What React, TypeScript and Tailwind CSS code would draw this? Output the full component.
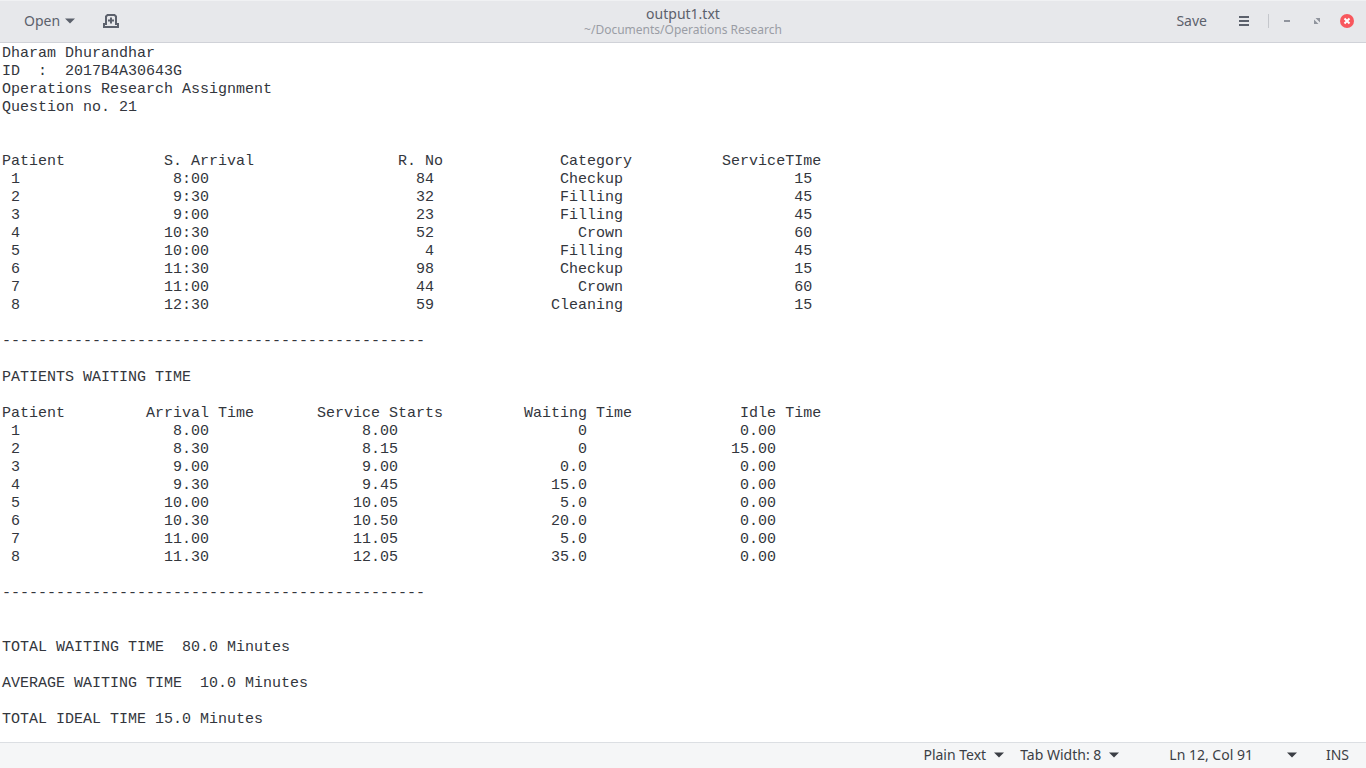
import React from "react";

const WAIT_RULE = "-".repeat(47);

/** Places [text, end column] pairs on one fixed-width line. */
function line(...cells: [string, number][]): string {
  return cells.reduce((out, [text, end]) => out + text.padStart(end - out.length), "");
}

const appointments: [string, string, string, string, string][] = [
  ["1", "8:00", "84", "Checkup", "15"],
  ["2", "9:30", "32", "Filling", "45"],
  ["3", "9:00", "23", "Filling", "45"],
  ["4", "10:30", "52", "Crown", "60"],
  ["5", "10:00", "4", "Filling", "45"],
  ["6", "11:30", "98", "Checkup", "15"],
  ["7", "11:00", "44", "Crown", "60"],
  ["8", "12:30", "59", "Cleaning", "15"],
];

const waits: [string, string, string, string, string][] = [
  ["1", "8.00", "8.00", "0", "0.00"],
  ["2", "8.30", "8.15", "0", "15.00"],
  ["3", "9.00", "9.00", "0.0", "0.00"],
  ["4", "9.30", "9.45", "15.0", "0.00"],
  ["5", "10.00", "10.05", "5.0", "0.00"],
  ["6", "10.30", "10.50", "20.0", "0.00"],
  ["7", "11.00", "11.05", "5.0", "0.00"],
  ["8", "11.30", "12.05", "35.0", "0.00"],
];

const documentText = [
  "Dharam Dhurandhar",
  "ID  :  2017B4A30643G",
  "Operations Research Assignment",
  "Question no. 21",
  "",
  "",
  line(["Patient", 7], ["S. Arrival", 28], ["R. No", 49], ["Category", 70], ["ServiceTIme", 91]),
  ...appointments.map(([n, a, r, c, s]) => line([n, 2], [a, 23], [r, 48], [c, 69], [s, 90])),
  "",
  WAIT_RULE,
  "",
  "PATIENTS WAITING TIME",
  "",
  line(["Patient", 7], ["Arrival Time", 28], ["Service Starts", 49], ["Waiting Time", 70], ["Idle Time", 91]),
  ...waits.map(([n, a, s, w, i]) => line([n, 2], [a, 23], [s, 44], [w, 65], [i, 86])),
  "",
  WAIT_RULE,
  "",
  "",
  "TOTAL WAITING TIME  80.0 Minutes",
  "",
  "AVERAGE WAITING TIME  10.0 Minutes",
  "",
  "TOTAL IDEAL TIME 15.0 Minutes",
].join("\n");

function Caret() {
  return (
    <svg width="10" height="6" viewBox="0 0 10 6" fill="currentColor" aria-hidden="true">
      <path d="M0 0.500h10L5 5.500z" />
    </svg>
  );
}

function HeaderBar() {
  return (
    <header className="grid h-[43px] shrink-0 grid-cols-[1fr_auto_1fr] items-center border-t border-b border-t-[#f0f1f3] border-b-[#d0d2d8] bg-[#e7e8eb] text-[#5c616c]">
      <div className="flex items-center gap-7 pb-0.5 pl-6">
        <button type="button" className="flex items-center gap-[5px]" aria-haspopup="menu">
          Open
          <Caret />
        </button>
        <button type="button" aria-label="New document">
          <svg width="16" height="16" viewBox="0 0 16 16" fill="none" stroke="currentColor" strokeWidth="2">
            <path d="M3 11V3.500L4.500 2h7L13 3.500V11" />
            <path d="M0 11h4M12 11h4M1 10v4h14v-4" />
            <path d="M8 4.500v6M5 7.500h6" />
          </svg>
        </button>
      </div>
      <div className="flex flex-col items-center">
        <h1 className="leading-4">output1.txt</h1>
        <p className="text-xs leading-4 text-[#9a9da5]">~/Documents/Operations Research</p>
      </div>
      <div className="flex items-center justify-end pr-3 pb-0.5">
        <button type="button" className="mr-8">Save</button>
        <button type="button" aria-label="Menu" className="mr-[19px]">
          <svg width="10" height="10" viewBox="0 0 10 10" fill="currentColor">
            <path d="M0 0h10v2H0zM0 4h10v2H0zM0 8h10v2H0z" />
          </svg>
        </button>
        <span className="mr-[15px] h-[14px] w-px bg-[#c5c7cc]" />
        <button type="button" aria-label="Minimize" className="mr-6">
          <svg width="6" height="6" viewBox="0 0 6 6" fill="#90949d">
            <path d="M0 2h6v2H0z" />
          </svg>
        </button>
        <button type="button" aria-label="Restore" className="mr-5">
          <svg width="6" height="6" viewBox="0 0 6 6" fill="#90949d">
            <path d="M1.500 0H6v4.500zM0 1.500L4.500 6H0z" />
          </svg>
        </button>
        <button type="button" aria-label="Close">
          <svg width="14" height="14" viewBox="0 0 14 14">
            <circle cx="7" cy="7" r="7" fill="#f8575d" />
            <path d="M4.500 4.500l5 5M9.500 4.500l-5 5" stroke="#fff" strokeWidth="2" />
          </svg>
        </button>
      </div>
    </header>
  );
}

function StatusBar() {
  return (
    <footer className="flex h-[26px] shrink-0 items-center justify-end border-t border-[#dcdfe3] bg-[#f5f6f7] pr-[17px] pb-px text-[#3b3e45]">
      <button type="button" className="mr-4 flex items-center gap-2" aria-haspopup="menu">
        Plain Text
        <Caret />
      </button>
      <button type="button" className="mr-[50px] flex items-center gap-2" aria-haspopup="menu">
        Tab Width: 8
        <Caret />
      </button>
      <button type="button" className="mr-[29px] flex items-center gap-[34px]" aria-haspopup="menu">
        Ln 12, Col 91
        <Caret />
      </button>
      <span>INS</span>
    </footer>
  );
}

export default function App() {
  return (
    <div className="flex h-screen flex-col bg-white font-['Noto_Sans',sans-serif] text-sm">
      <HeaderBar />
      <textarea
        aria-label="output1.txt"
        spellCheck={false}
        wrap="off"
        defaultValue={documentText}
        className="min-h-0 w-full flex-1 resize-none overflow-auto bg-white px-0.5 pt-0.5 font-['Liberation_Mono',monospace] text-[15px] leading-[18px] text-[#33363d] outline-none"
      />
      <StatusBar />
    </div>
  );
}
